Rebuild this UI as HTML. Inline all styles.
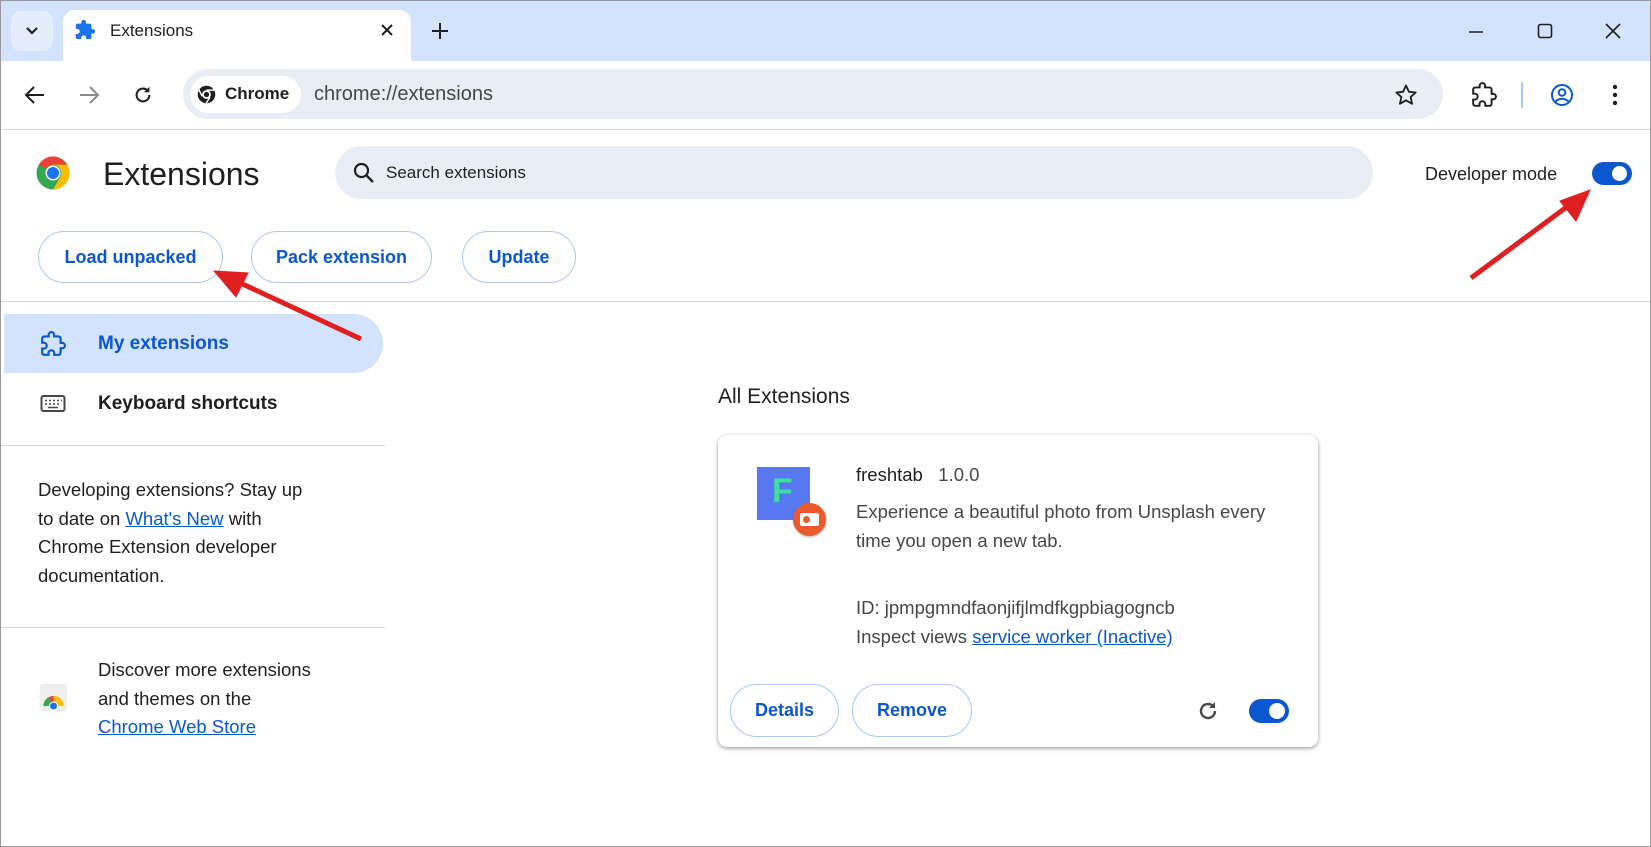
<!DOCTYPE html>
<html><head><meta charset="utf-8"><style>
*{box-sizing:border-box;margin:0;padding:0}
body{width:1651px;height:847px;overflow:hidden;font-family:"Liberation Sans",sans-serif;background:#fff;position:relative;color:#1f1f1f}
.a{position:absolute}
.btn{position:absolute;border:1px solid #a8c7fa;border-radius:28px;color:#0b57d0;font-size:18px;font-weight:bold;display:flex;align-items:center;justify-content:center;background:#fff}
.t{position:absolute;white-space:nowrap}
a{color:#0b57d0}
</style></head><body>
<div class="a" style="left:0;top:0;width:1651px;height:847px;border:1px solid #9a9a9a;z-index:10;pointer-events:none"></div>
<!-- tab bar -->
<div class="a" style="left:0;top:0;width:1651px;height:61px;background:#d3e3fd"></div>
<div class="a" style="left:11px;top:11px;width:42px;height:40px;background:#e5edfb;border-radius:10px"></div>
<svg class="a" style="left:24px;top:24px" width="16" height="14"><path d="M3 4l5 5 5-5" stroke="#1f1f1f" stroke-width="2.2" fill="none"/></svg>
<div class="a" style="left:63px;top:10px;width:348px;height:52px;background:#fff;border-radius:12px 12px 0 0"></div>
<svg class="a" style="left:74px;top:19px" width="22" height="22" viewBox="0 0 24 24"><path d="M20.5 11H19V7a2 2 0 0 0-2-2h-4V3.5a2.5 2.5 0 0 0-5 0V5H4a2 2 0 0 0-2 2v3.8h1.5a2.7 2.7 0 0 1 0 5.4H2V20a2 2 0 0 0 2 2h3.8v-1.5a2.7 2.7 0 0 1 5.4 0V22H17a2 2 0 0 0 2-2v-4h1.5a2.5 2.5 0 0 0 0-5z" fill="#1a73e8"/></svg>
<div class="t" style="left:110px;top:21px;font-size:17px;color:#1f1f1f">Extensions</div>
<svg class="a" style="left:380px;top:23px" width="14" height="14"><path d="M2 2l10 10M12 2L2 12" stroke="#1f1f1f" stroke-width="2"/></svg>
<svg class="a" style="left:431px;top:22px" width="18" height="18"><path d="M9 1v16M1 9h16" stroke="#1f1f1f" stroke-width="2"/></svg>
<svg class="a" style="left:1468px;top:24px" width="16" height="16"><path d="M1 8h14" stroke="#1f1f1f" stroke-width="1.5"/></svg>
<svg class="a" style="left:1537px;top:23px" width="16" height="16"><rect x="1.5" y="1.5" width="13" height="13" rx="2" stroke="#1f1f1f" stroke-width="1.6" fill="none"/></svg>
<svg class="a" style="left:1605px;top:23px" width="16" height="16"><path d="M1 1l14 14M15 1L1 15" stroke="#1f1f1f" stroke-width="1.6"/></svg>
<!-- toolbar -->
<svg class="a" style="left:24px;top:84px" width="22" height="22" viewBox="0 0 22 22"><path d="M20 11H3M10 3l-8 8 8 8" stroke="#1f1f1f" stroke-width="2" fill="none"/></svg>
<svg class="a" style="left:78px;top:84px" width="22" height="22" viewBox="0 0 22 22"><path d="M2 11h17M12 3l8 8-8 8" stroke="#8a8a8a" stroke-width="2" fill="none"/></svg>
<svg class="a" style="left:132px;top:84px" width="22" height="22" viewBox="0 0 24 24"><path d="M19 12a7 7 0 1 1-2.1-5" stroke="#1f1f1f" stroke-width="2.2" fill="none"/><path d="M19 3v6h-6z" fill="#1f1f1f"/></svg>
<div class="a" style="left:183px;top:69px;width:1260px;height:50px;background:#e9eef6;border-radius:25px"></div>
<div class="a" style="left:190px;top:76px;width:111px;height:37px;background:#fff;border-radius:19px"></div>
<svg class="a" style="left:196px;top:84px" width="21" height="21" viewBox="0 0 24 24"><circle cx="12" cy="12" r="10" fill="#1f1f1f"/><circle cx="12" cy="12" r="5" fill="#fff"/><circle cx="12" cy="12" r="3" fill="#1f1f1f"/><path d="M12 7h9M16 15l-5 8M7 14L3 6" stroke="#fff" stroke-width="1.6"/></svg>
<div class="t" style="left:225px;top:84px;font-size:17px;font-weight:bold">Chrome</div>
<div class="t" style="left:314px;top:83px;font-size:20px;color:#474747">chrome://extensions</div>
<svg class="a" style="left:1394px;top:83px" width="24" height="24" viewBox="0 0 24 24"><path d="M12 2.5l2.9 6.3 6.8.7-5.1 4.6 1.5 6.7L12 17.3 5.9 20.8l1.5-6.7-5.1-4.6 6.8-.7z" stroke="#1f1f1f" stroke-width="1.8" fill="none" stroke-linejoin="round"/></svg>
<svg class="a" style="left:1471px;top:82px" width="26" height="26" viewBox="0 0 24 24"><path d="M20.5 11H19V7a2 2 0 0 0-2-2h-4V3.5a2.5 2.5 0 0 0-5 0V5H4a2 2 0 0 0-2 2v3.8h1.5a2.7 2.7 0 0 1 0 5.4H2V20a2 2 0 0 0 2 2h3.8v-1.5a2.7 2.7 0 0 1 5.4 0V22H17a2 2 0 0 0 2-2v-4h1.5a2.5 2.5 0 0 0 0-5z" fill="none" stroke="#1f1f1f" stroke-width="1.8"/></svg>
<div class="a" style="left:1521px;top:82px;width:2px;height:26px;background:#a8c7fa"></div>
<svg class="a" style="left:1550px;top:83px" width="24" height="24" viewBox="0 0 24 24"><circle cx="12" cy="12" r="10" stroke="#0b57d0" stroke-width="2" fill="none"/><circle cx="12" cy="9.5" r="3.3" stroke="#0b57d0" stroke-width="2" fill="none"/><path d="M5.5 18.5c3.5-3.5 9.5-3.5 13 0" stroke="#0b57d0" stroke-width="2" fill="none"/></svg>
<svg class="a" style="left:1612px;top:84px" width="6" height="22"><circle cx="3" cy="3" r="2.2" fill="#1f1f1f"/><circle cx="3" cy="11" r="2.2" fill="#1f1f1f"/><circle cx="3" cy="19" r="2.2" fill="#1f1f1f"/></svg>
<div class="a" style="left:0;top:129px;width:1651px;height:1px;background:#d6d6d6"></div>
<!-- header -->
<svg class="a" style="left:35px;top:155px" width="36" height="36" viewBox="0 0 48 48"><circle cx="24" cy="24" r="22" fill="#34a853"/><path d="M24 2a22 22 0 0 1 19 11H24a11 11 0 0 0-9.5 5.5L5 13A22 22 0 0 1 24 2z" fill="#ea4335"/><path d="M43 13a22 22 0 0 1-19 33l9.5-16.5A11 11 0 0 0 24 13z" fill="#fbbc04"/><circle cx="24" cy="24" r="10" fill="#fff"/><circle cx="24" cy="24" r="8" fill="#1a73e8"/></svg>
<div class="t" style="left:103px;top:156px;font-size:32px">Extensions</div>
<div class="a" style="left:335px;top:146px;width:1038px;height:53px;background:#e9eef6;border-radius:27px"></div>
<svg class="a" style="left:352px;top:161px" width="24" height="24" viewBox="0 0 24 24"><circle cx="9.5" cy="9.5" r="6.5" stroke="#1f1f1f" stroke-width="2.2" fill="none"/><path d="M14.5 14.5L21 21" stroke="#1f1f1f" stroke-width="2.4"/></svg>
<div class="t" style="left:386px;top:163px;font-size:17px;color:#1f1f1f">Search extensions</div>
<div class="t" style="left:1425px;top:164px;font-size:18px;color:#1f1f1f">Developer mode</div>
<div class="a" style="left:1592px;top:162px;width:40px;height:23px;background:#0b57d0;border-radius:12px"></div>
<div class="a" style="left:1612px;top:166px;width:15px;height:15px;background:#fff;border-radius:50%"></div>
<div class="btn" style="left:38px;top:231px;width:185px;height:52px">Load unpacked</div>
<div class="btn" style="left:251px;top:231px;width:181px;height:52px">Pack extension</div>
<div class="btn" style="left:462px;top:231px;width:114px;height:52px">Update</div>
<div class="a" style="left:0;top:301px;width:1651px;height:1px;background:#d6d6d6"></div>
<!-- sidebar -->
<div class="a" style="left:4px;top:314px;width:379px;height:59px;background:#d3e3fd;border-radius:0 30px 30px 0"></div>
<svg class="a" style="left:40px;top:331px" width="26" height="26" viewBox="0 0 24 24"><path d="M20.5 11H19V7a2 2 0 0 0-2-2h-4V3.5a2.5 2.5 0 0 0-5 0V5H4a2 2 0 0 0-2 2v3.8h1.5a2.7 2.7 0 0 1 0 5.4H2V20a2 2 0 0 0 2 2h3.8v-1.5a2.7 2.7 0 0 1 5.4 0V22H17a2 2 0 0 0 2-2v-4h1.5a2.5 2.5 0 0 0 0-5z" fill="none" stroke="#0b57d0" stroke-width="2"/></svg>
<div class="t" style="left:98px;top:333px;font-size:19px;color:#0b57d0;font-weight:bold">My extensions</div>
<svg class="a" style="left:40px;top:394px" width="26" height="20" viewBox="0 0 26 20"><rect x="1.5" y="2" width="23" height="15" rx="2" stroke="#474747" stroke-width="2" fill="none"/><path d="M5 6.5h2M9 6.5h2M13 6.5h2M17 6.5h2M21 6.5h1M5 10h2M9 10h2M13 10h2M17 10h2M8 13.5h10" stroke="#474747" stroke-width="1.6"/></svg>
<div class="t" style="left:98px;top:393px;font-size:19px;font-weight:bold">Keyboard shortcuts</div>
<div class="a" style="left:0;top:445px;width:385px;height:1px;background:#d6d6d6"></div>
<div class="a" style="left:38px;top:476px;white-space:nowrap;font-size:18.5px;line-height:28.5px;color:#1f1f1f">Developing extensions? Stay up<br>to date on <a href="#">What's New</a> with<br>Chrome Extension developer<br>documentation.</div>
<div class="a" style="left:0;top:627px;width:385px;height:1px;background:#d6d6d6"></div>
<div class="a" style="left:40px;top:684px;width:27px;height:27px;background:#eee;border-radius:3px"></div>
<svg class="a" style="left:41px;top:691px" width="25" height="20" viewBox="0 0 48 40"><path d="M4 30A20 20 0 0 1 44 30z" fill="#ea4335"/><path d="M24 10a20 20 0 0 1 20 20H24z" fill="#fbbc04"/><path d="M4 30a20 20 0 0 1 10-17l10 17z" fill="#34a853"/><circle cx="24" cy="30" r="9" fill="#fff"/><circle cx="24" cy="30" r="7" fill="#1a73e8"/></svg>
<div class="a" style="left:98px;top:656px;white-space:nowrap;font-size:18.5px;line-height:28.5px">Discover more extensions<br>and themes on the<br><a href="#">Chrome Web Store</a></div>
<!-- main -->
<div class="t" style="left:718px;top:385px;font-size:21px">All Extensions</div>
<div class="a" style="left:718px;top:435px;width:600px;height:312px;background:#fff;border-radius:9px;box-shadow:0 1px 3px rgba(0,0,0,.3),0 2px 6px rgba(0,0,0,.15)"></div>
<div class="a" style="left:757px;top:467px;width:53px;height:53px;background:#5878f2"></div>
<div class="t" style="left:772px;top:472px;font-size:34px;font-weight:bold;color:#3ee0a0">F</div>
<div class="a" style="left:793px;top:503px;width:33px;height:33px;background:#ed5a2a;border-radius:50%;box-shadow:0 1px 2px rgba(0,0,0,.3)"></div>
<div class="a" style="left:800px;top:513px;width:19px;height:13px;background:#fff;border-radius:2px"></div>
<div class="a" style="left:803px;top:516px;width:7px;height:7px;background:#ed5a2a;border-radius:50%"></div>
<div class="t" style="left:856px;top:464px;font-size:18.5px">freshtab&nbsp;&nbsp; <span style="color:#474747">1.0.0</span></div>
<div class="a" style="left:856px;top:497px;width:440px;font-size:18.5px;line-height:29px;color:#474747">Experience a beautiful photo from Unsplash every time you open a new tab.</div>
<div class="t" style="left:856px;top:597px;font-size:18.5px;color:#474747">ID: jpmpgmndfaonjifjlmdfkgpbiagogncb</div>
<div class="t" style="left:856px;top:626px;font-size:18.5px;color:#474747">Inspect views <a href="#">service worker (Inactive)</a></div>
<div class="btn" style="left:730px;top:684px;width:109px;height:53px">Details</div>
<div class="btn" style="left:852px;top:684px;width:120px;height:53px">Remove</div>
<svg class="a" style="left:1196px;top:699px" width="24" height="24" viewBox="0 0 24 24"><path d="M19 12a7 7 0 1 1-2.1-5" stroke="#474747" stroke-width="2.4" fill="none"/><path d="M19 3v6h-6z" fill="#474747"/></svg>
<div class="a" style="left:1249px;top:699px;width:40px;height:24px;background:#0b57d0;border-radius:12px"></div>
<div class="a" style="left:1269px;top:703px;width:16px;height:16px;background:#fff;border-radius:50%"></div>
<!-- arrows -->
<svg class="a" style="left:0;top:0" width="1651" height="847"><g stroke="#e02020" stroke-width="5" fill="#e02020"><line x1="361" y1="339" x2="236" y2="281"/><path d="M214 271l34 2-12 24z" stroke-width="1"/><line x1="1471" y1="278" x2="1572" y2="203"/><path d="M1590 190l-14 31-16-20z" stroke-width="1"/></g></svg>
</body></html>
